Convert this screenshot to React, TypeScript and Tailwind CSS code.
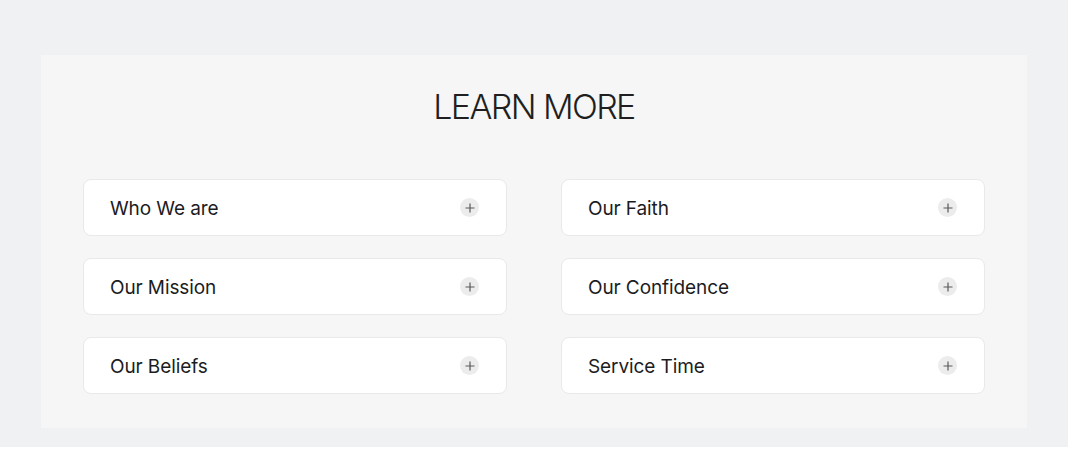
import React from 'react';

const items = [
  'Who We are',
  'Our Faith',
  'Our Mission',
  'Our Confidence',
  'Our Beliefs',
  'Service Time',
];

const PlusBadge = () => (
  <span className="flex h-[19px] w-[19px] items-center justify-center rounded-full bg-[#ececed]">
    <svg width="10" height="10" viewBox="0 0 10 10" fill="none">
      <path d="M5 0.5v9M0.5 5h9" stroke="#5a5a5a" strokeWidth="1.2" />
    </svg>
  </span>
);

export default function App() {
  return (
    <div className="w-[1068px] h-[447px] bg-[#f0f1f3] pt-[55px] px-[41px] font-['Inter',sans-serif]">
      <div className="bg-[#f6f6f6] h-[373px] px-[42px] pt-[30px]">
        <h2 className="text-center text-[34px] leading-[44px] font-light tracking-[-1.6px] text-[#1f1f22]">
          LEARN MORE
        </h2>
        <div className="mt-[50px] grid grid-cols-2 gap-x-[54px] gap-y-[22px]">
          {items.map(label => (
            <button
              key={label}
              className="flex h-[57px] items-center justify-between rounded-[8px] border border-[#e9e9eb] bg-white pl-[26px] pr-[27px] text-left"
            >
              <span className="pt-[4px] text-[19px] font-normal tracking-[-0.1px] text-[#1c1c1f]">{label}</span>
              <PlusBadge />
            </button>
          ))}
        </div>
      </div>
    </div>
  );
}
